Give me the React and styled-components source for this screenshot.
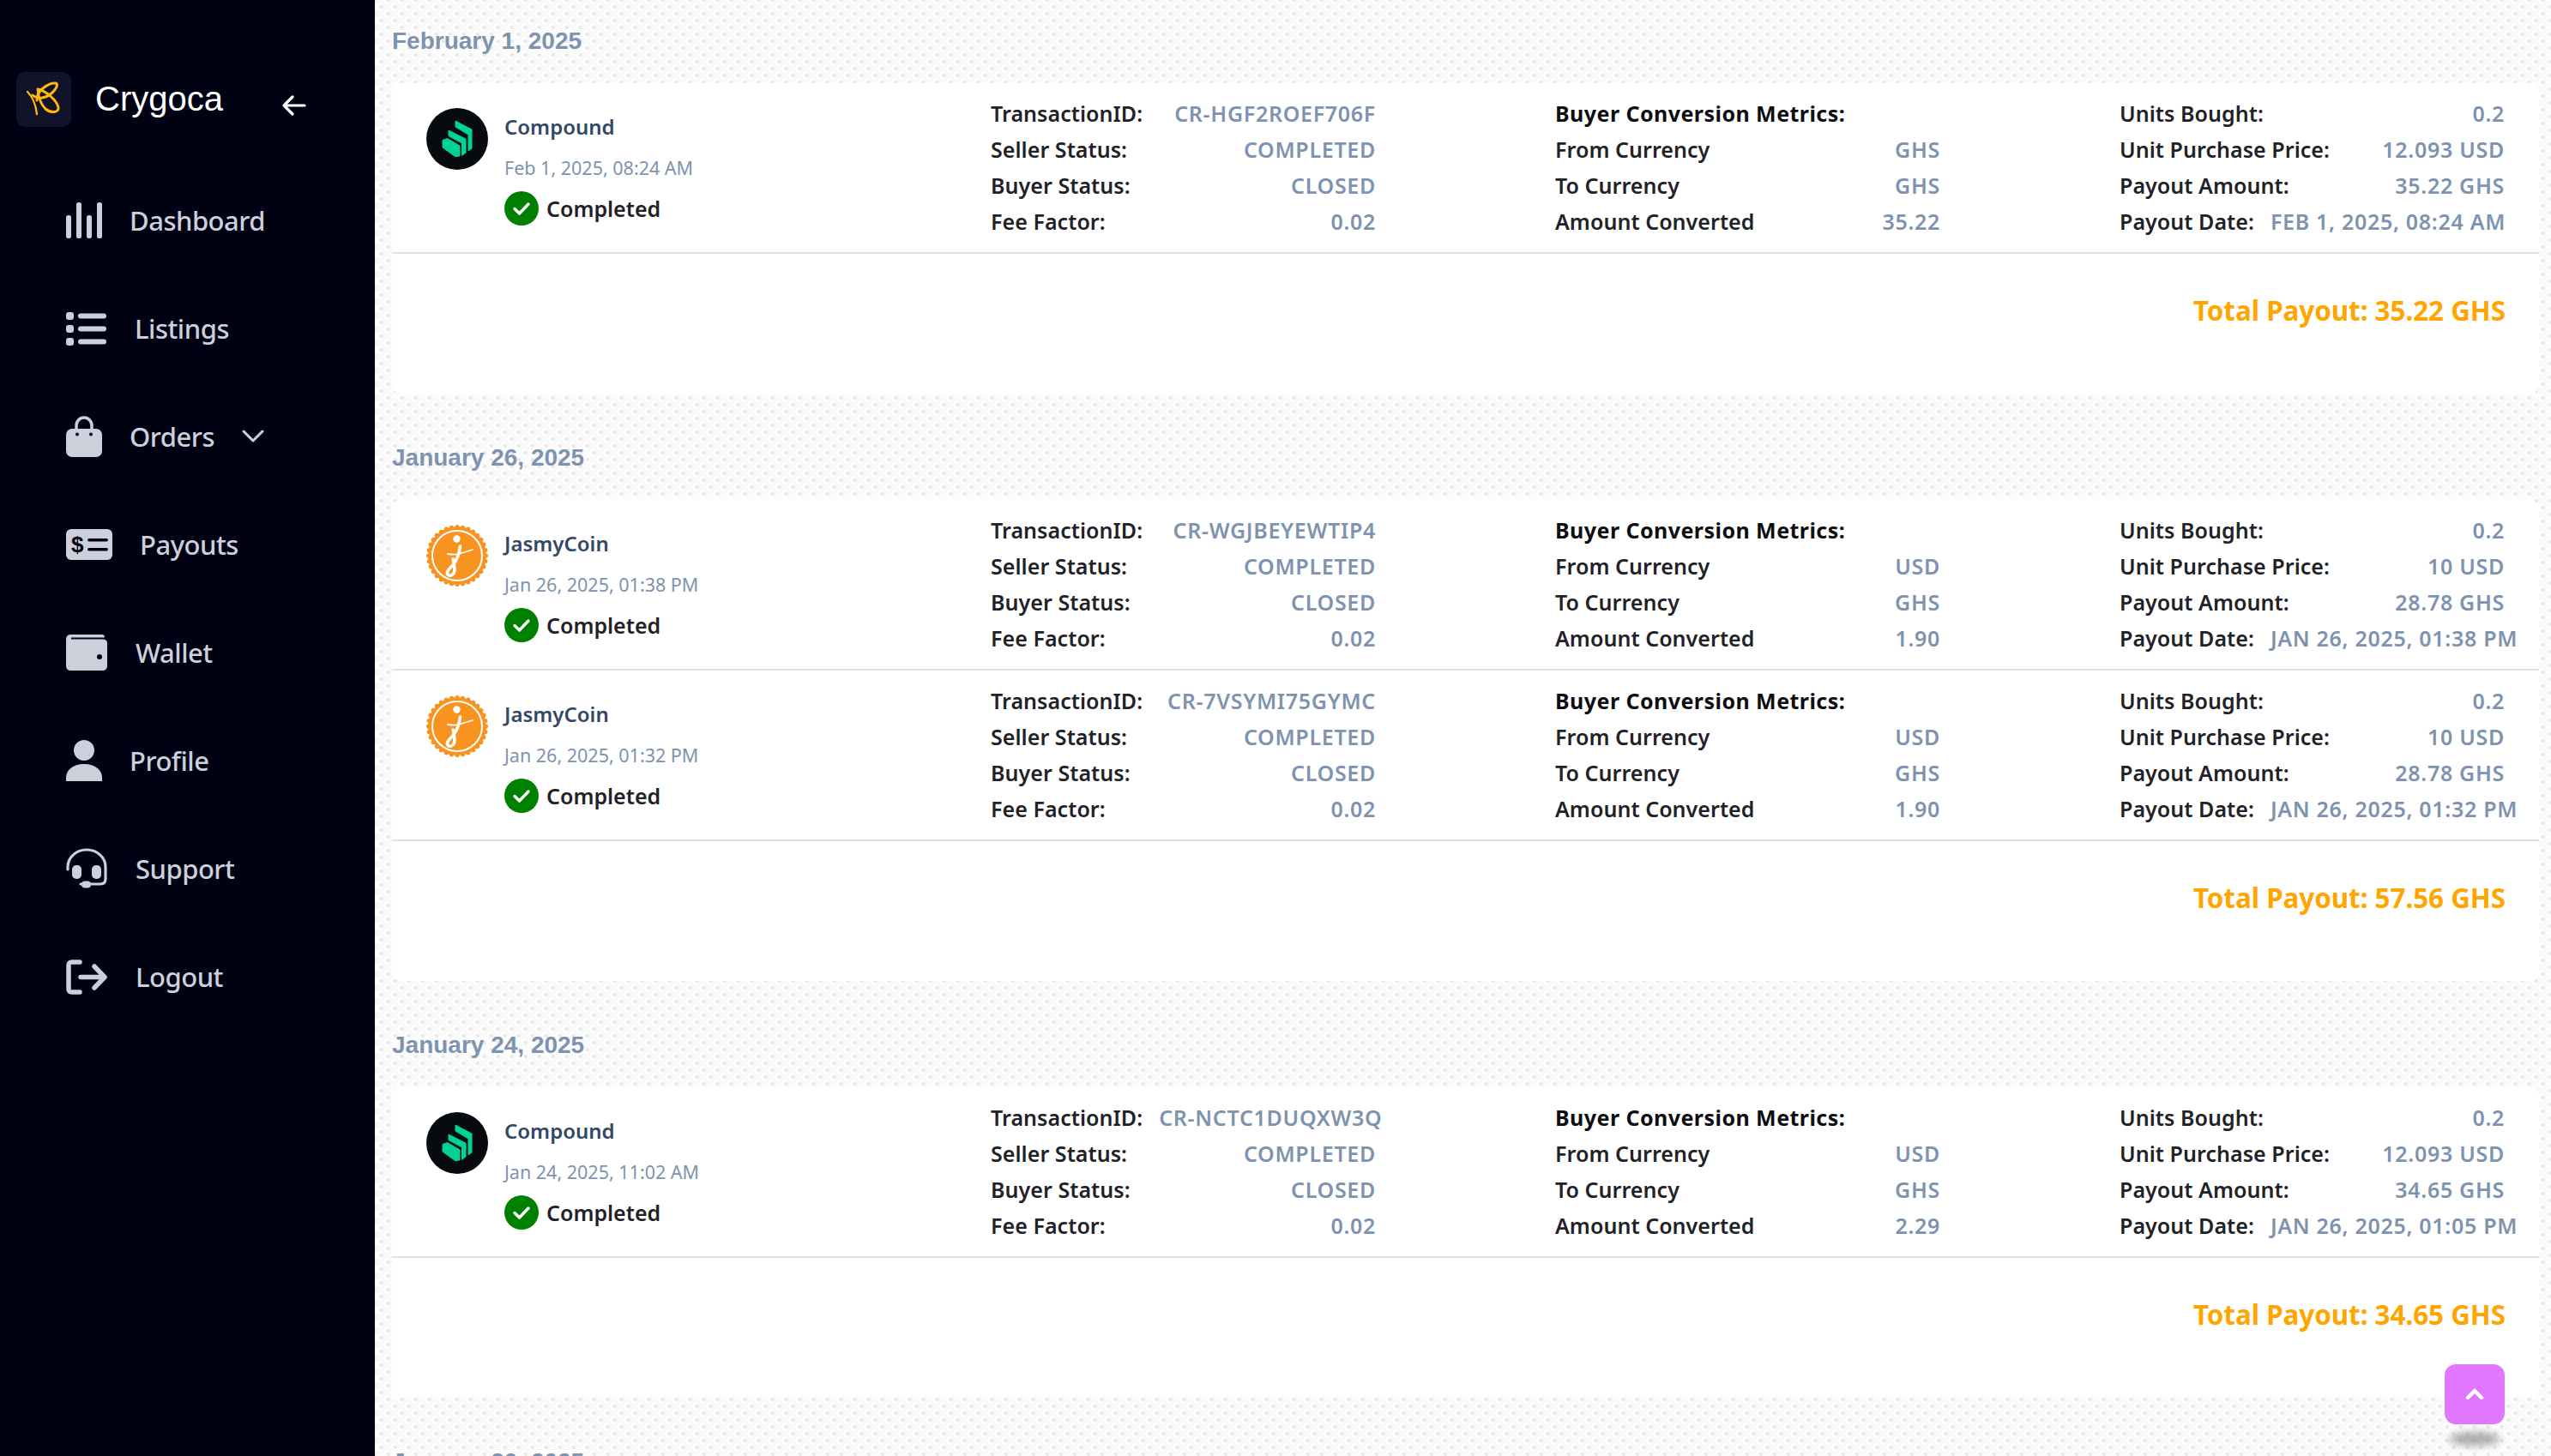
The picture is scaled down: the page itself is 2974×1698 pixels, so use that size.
import React from "react";
import styled, { createGlobalStyle } from "styled-components";

const Global = createGlobalStyle`
  html, body { margin: 0; padding: 0; height: 1698px; overflow: hidden; background: #fcfcfc; }
  * { box-sizing: border-box; }
  #root { height: 1698px; }
`;
const UI = `"Noto Sans", "Open Sans", sans-serif`;
const AR = `"Liberation Sans", Arial, sans-serif`;

const Page = styled.div`display:flex;height:1698px;overflow:hidden;position:relative;font-family:${UI};`;
const Sidebar = styled.aside`flex:0 0 437px;background:#000214;padding-top:84px;color:#cdd0da;`;
const Brand = styled.div`display:flex;align-items:center;height:64px;padding-left:19px;margin-bottom:46px;`;
const LogoBox = styled.div`width:64px;height:64px;border-radius:10px;background:#12122a;display:flex;`;
const BrandName = styled.span`font:400 40px ${AR};color:#fff;margin-left:28px;line-height:64px;position:relative;top:-1px;`;
const BackArrow = styled.svg`width:30px;height:26px;margin-left:68px;margin-top:14px;`;
const Nav = styled.nav`display:flex;flex-direction:column;`;
const NavItem = styled.div`height:126px;display:flex;align-items:center;padding-left:77px;gap:${p=>p.$gap}px;font-size:31px;font-weight:500;color:#cdd0da;letter-spacing:-0.5px;`;
const Chevron = styled.svg`width:26px;height:16px;margin-left:0;`;

const Main = styled.main`flex:1;min-width:0;padding:0 14px 0 20px;
  background-color:#fcfcfc;
  background-image:radial-gradient(circle,#e9e9e9 1.6px,transparent 2.4px),radial-gradient(circle,#e9e9e9 1.6px,transparent 2.4px);
  background-size:16px 16px;background-position:0 0,8px 8px;`;
const Section = styled.section`margin-bottom:27px;`;
const DateTitle = styled.h2`margin:0;height:97px;display:flex;align-items:center;font:700 28px ${AR};color:#7e93b0;padding-bottom:1px;`;
const Card = styled.div`background:#fff;border-radius:10px;`;
const Row = styled.div`height:199px;border-bottom:2px solid #dde1ee;padding:14px 40px 0;display:grid;grid-template-columns:repeat(4,449px);column-gap:209px;`;
const Coin = styled.div`display:flex;gap:19px;padding-top:15px;`;
const CoinText = styled.div`display:flex;flex-direction:column;margin-top:2px;`;
const CoinName = styled.div`font-size:24px;font-weight:600;color:#334766;line-height:42px;height:42px;margin-top:-1px;white-space:nowrap;`;
const CoinDate = styled.div`font-size:21.5px;color:#7e93b0;line-height:46px;height:46px;margin-top:4px;white-space:nowrap;`;
const Status = styled.div`display:flex;align-items:center;gap:9px;font-size:25px;font-weight:600;color:#1f2228;height:40px;margin-top:4px;`;
const Field = styled.div`display:flex;flex-direction:column;`;
const FieldRow = styled.div`display:flex;justify-content:space-between;gap:19px;height:42px;align-items:center;font-size:25px;white-space:nowrap;`;
const Label = styled.span`font-weight:600;color:#1f2228;letter-spacing:.05px;`;
const Strong = styled.span`font-weight:700;color:#0c0e12;letter-spacing:.45px;`;
const Value = styled.span`font-weight:600;color:#7e93b0;text-transform:uppercase;letter-spacing:.7px;`;
const Total = styled.div`height:163px;display:flex;justify-content:flex-end;padding:44px 39px 0 0;font-size:31.3px;font-weight:700;color:#ffa500;line-height:44px;`;
const TopButton = styled.button`position:absolute;left:2850px;top:1591px;width:70px;height:70px;border:0;border-radius:13px;background:#e177ff;display:flex;align-items:center;justify-content:center;padding:0;
  &::after{content:"";position:absolute;left:5px;right:5px;bottom:-25px;height:16px;border-radius:50%;background:rgba(90,90,90,.5);filter:blur(5px);}`;

const Butterfly = () => (
  <svg width="64" height="64" viewBox="0 0 64 64" fill="none" stroke="#ffb80c" strokeLinecap="round" strokeWidth="3">
    <path d="M13 23 C18 28 22 34 24 49" strokeWidth="2.4" />
    <path d="M24 33 C23 22 38 12 46 13 C51 15 42 28 30 30 C26 31 21 29 19 27" />
    <path d="M25 20 C35 22 47 33 49 41 C50 48 40 48 34 43 C29 38 26 32 25 20" />
  </svg>
);

const icons = {
  dashboard: <svg width="42" height="42" viewBox="0 0 42 42" fill="#cdd0da"><rect x="0" y="15" width="6" height="27" rx="2.5"/><rect x="12" y="0" width="6" height="42" rx="2.5"/><rect x="24" y="15" width="6" height="27" rx="2.5"/><rect x="36" y="0" width="6" height="42" rx="2.5"/></svg>,
  listings: <svg width="47" height="39" viewBox="0 0 47 39" fill="#cdd0da"><rect x="0" y="0" width="9" height="9" rx="3"/><rect x="0" y="15" width="9" height="9" rx="3"/><rect x="0" y="30" width="9" height="9" rx="3"/><rect x="14" y="1.5" width="33" height="6" rx="3"/><rect x="14" y="16.5" width="33" height="6" rx="3"/><rect x="14" y="31.5" width="33" height="6" rx="3"/></svg>,
  orders: <svg width="42" height="48" viewBox="0 0 42 48"><path d="M12 17 V11 a9 9 0 0 1 18 0 V17" fill="none" stroke="#cdd0da" strokeWidth="3.5"/><rect x="0" y="15" width="42" height="33" rx="7" fill="#cdd0da"/><circle cx="13" cy="21.5" r="2" fill="#000214"/><circle cx="29" cy="21.5" r="2" fill="#000214"/></svg>,
  payouts: <svg width="54" height="36" viewBox="0 0 54 36"><rect width="54" height="36" rx="6" fill="#cdd0da"/><text x="13" y="27" textAnchor="middle" fontFamily={AR} fontWeight="700" fontSize="26" fill="#000214">$</text><rect x="25" y="11" width="24" height="3.5" rx="1.7" fill="#000214"/><rect x="25" y="22" width="24" height="3.5" rx="1.7" fill="#000214"/></svg>,
  wallet: <svg width="48" height="42" viewBox="0 0 48 42" fill="#cdd0da"><path d="M0 6 C0 2 2 0 6 0 H42 C44 0 45 1.5 45 3.5 H6 V5.5 H43 C46 5.5 48 7 48 10 V36 C48 40 46 42 42 42 H6 C2 42 0 40 0 36Z"/><circle cx="39" cy="26" r="3" fill="#000214"/></svg>,
  profile: <svg width="42" height="48" viewBox="0 0 42 48" fill="#cdd0da"><circle cx="21" cy="12" r="12"/><path d="M0 48 V44 C0 35 8 28 21 28 S42 35 42 44 V48Z"/></svg>,
  support: <svg width="48" height="48" viewBox="0 0 48 48"><path d="M2 25 V22 a22 20 0 0 1 44 0 V36 c0 4 -2 6 -6 6 H17" fill="none" stroke="#cdd0da" strokeWidth="3.2" strokeLinecap="round"/><rect x="7" y="20" width="11" height="16" rx="5" fill="#cdd0da"/><rect x="30" y="20" width="11" height="16" rx="5" fill="#cdd0da"/><rect x="18" y="38.5" width="11" height="8" rx="4" fill="#cdd0da"/></svg>,
  logout: <svg width="48" height="41" viewBox="0 0 48 41" fill="none" stroke="#cdd0da" strokeWidth="5.5" strokeLinecap="round" strokeLinejoin="round"><path d="M16 3 H7 C4 3 3 4 3 7 V34 C3 37 4 38 7 38 H16"/><path d="M17 20.5 H45 M33 8 L45 20.5 L33 33"/></svg>,
};

const NAV = [
  ["Dashboard","dashboard",32],["Listings","listings",33],["Orders","orders",32,true],["Payouts","payouts",32],
  ["Wallet","wallet",33],["Profile","profile",32],["Support","support",33],["Logout","logout",33],
];

const CompoundLogo = () => (
  <svg width="72" height="72" viewBox="0 0 72 72"><circle cx="36" cy="36" r="36" fill="#070a0e"/>
    <g fill="#00d395" stroke="#00d395" strokeWidth="1" strokeLinejoin="round">
      <path d="M34 15 L53 25 V47 L49 50 V31 L34 22Z"/>
      <path d="M26 26 L46 36 V52 L41.5 55.5 V41 L26 32.5Z"/>
      <path d="M19 37.5 L24.5 35.5 L39 44 V56 L33.5 56.5 L19 46Z"/>
    </g>
  </svg>
);
const JasmyLogo = () => {
  const teeth = Array.from({length:32},(_,i)=>{const a=i/32*Math.PI*2;return [36+33.4*Math.cos(a),36+33.4*Math.sin(a)];});
  return (
    <svg width="72" height="72" viewBox="0 0 72 72">
      {teeth.map(([x,y],i)=><circle key={i} cx={x} cy={y} r="2.6" fill="#f7931e"/>)}
      <circle cx="36" cy="36" r="34" fill="#f7931e"/>
      <circle cx="36" cy="36" r="29" fill="none" stroke="#fff" strokeWidth="2"/>
      <circle cx="35.5" cy="16.5" r="4.2" fill="#fff"/>
      <g fill="none" stroke="#fff" strokeLinecap="round">
        <path d="M39.5 25 C38.5 34 35 42 31 47 C26 52 23 55 25 58 C28 61 33 58 33 52 C33 48 32 45 31 40" strokeWidth="3.6"/>
        <path d="M25 34 C31 35 37 35 41 33 L54 29" strokeWidth="1.8"/>
      </g>
    </svg>
  );
};
const Check = () => (
  <svg width="40" height="40" viewBox="0 0 40 40"><circle cx="20" cy="20" r="20" fill="#008000"/><path d="M12 20.5 L17.5 26 L28 15" fill="none" stroke="#fff" strokeWidth="3.4" strokeLinecap="round" strokeLinejoin="round"/></svg>
);

const tx = (coin,date,id,from,to,conv,price,amount,pdate) => ({coin,date,id,from,to,conv,price,amount,pdate});
const SECTIONS = [
  {title:"February 1, 2025",total:"35.22 GHS",rows:[tx("Compound","Feb 1, 2025, 08:24 AM","CR-HGF2ROEF706F","GHS","GHS","35.22","12.093 USD","35.22 GHS","Feb 1, 2025, 08:24 AM")]},
  {title:"January 26, 2025",total:"57.56 GHS",rows:[
    tx("JasmyCoin","Jan 26, 2025, 01:38 PM","CR-WGJBEYEWTIP4","USD","GHS","1.90","10 USD","28.78 GHS","Jan 26, 2025, 01:38 PM"),
    tx("JasmyCoin","Jan 26, 2025, 01:32 PM","CR-7VSYMI75GYMC","USD","GHS","1.90","10 USD","28.78 GHS","Jan 26, 2025, 01:32 PM"),
  ]},
  {title:"January 24, 2025",total:"34.65 GHS",rows:[tx("Compound","Jan 24, 2025, 11:02 AM","CR-NCTC1DUQXW3Q","USD","GHS","2.29","12.093 USD","34.65 GHS","Jan 26, 2025, 01:05 PM")]},
];

const Pair = ({k,v}) => <FieldRow><Label>{k}</Label><Value>{v}</Value></FieldRow>;

const TxRow = ({r}) => (
  <Row>
    <Coin>
      {r.coin==="Compound"?<CompoundLogo/>:<JasmyLogo/>}
      <CoinText>
        <CoinName>{r.coin}</CoinName>
        <CoinDate>{r.date}</CoinDate>
        <Status><Check/>Completed</Status>
      </CoinText>
    </Coin>
    <Field>
      <Pair k="TransactionID:" v={r.id}/>
      <Pair k="Seller Status:" v="Completed"/>
      <Pair k="Buyer Status:" v="Closed"/>
      <Pair k="Fee Factor:" v="0.02"/>
    </Field>
    <Field>
      <FieldRow><Strong>Buyer Conversion Metrics:</Strong></FieldRow>
      <Pair k="From Currency" v={r.from}/>
      <Pair k="To Currency" v={r.to}/>
      <Pair k="Amount Converted" v={r.conv}/>
    </Field>
    <Field>
      <Pair k="Units Bought:" v="0.2"/>
      <Pair k="Unit Purchase Price:" v={r.price}/>
      <Pair k="Payout Amount:" v={r.amount}/>
      <Pair k="Payout Date:" v={r.pdate}/>
    </Field>
  </Row>
);

export default function App(){
  return (
    <Page>
      <Global/>
      <Sidebar>
        <Brand>
          <LogoBox><Butterfly/></LogoBox>
          <BrandName>Crygoca</BrandName>
          <BackArrow viewBox="0 0 30 26" fill="none" stroke="#fff" strokeWidth="3.2" strokeLinecap="round" strokeLinejoin="round"><path d="M27 13 H3 M13 3 L3 13 L13 23"/></BackArrow>
        </Brand>
        <Nav>
          {NAV.map(([label,key,gap,more])=>(
            <NavItem key={label} $gap={gap}>
              {icons[key]}
              <span>{label}</span>
              {more && <Chevron viewBox="0 0 26 16" fill="none" stroke="#cdd0da" strokeWidth="3" strokeLinecap="round" strokeLinejoin="round"><path d="M2 2 L13 13 L24 2"/></Chevron>}
            </NavItem>
          ))}
        </Nav>
      </Sidebar>
      <Main>
        {SECTIONS.map(s=>(
          <Section key={s.title}>
            <DateTitle>{s.title}</DateTitle>
            <Card>
              {s.rows.map(r=><TxRow key={r.id} r={r}/>)}
              <Total>Total Payout: {s.total}</Total>
            </Card>
          </Section>
        ))}
        <DateTitle>January 20, 2025</DateTitle>
      </Main>
      <TopButton aria-label="Back to top"><svg width="22" height="14" viewBox="0 0 22 14" fill="none" stroke="#fff" strokeWidth="4.5" strokeLinecap="round" strokeLinejoin="round"><path d="M3 11 L11 3 L19 11"/></svg></TopButton>
    </Page>
  );
}
